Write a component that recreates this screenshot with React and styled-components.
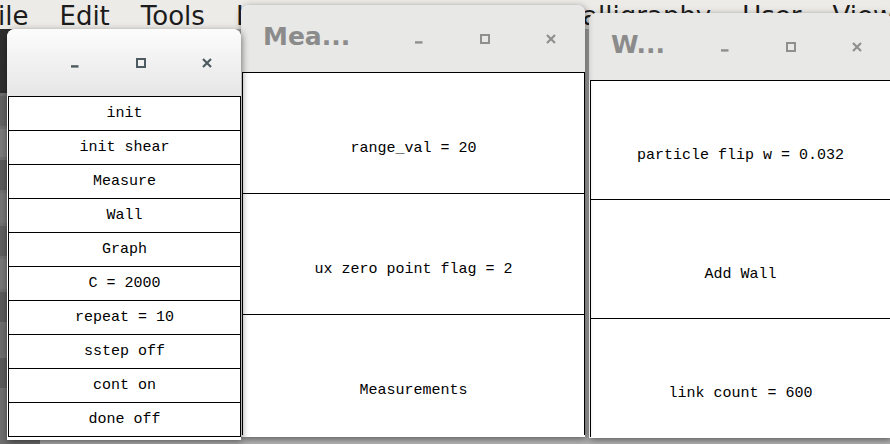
import styled, { createGlobalStyle } from "styled-components";

const GlobalStyle = createGlobalStyle`
  html, body {
    margin: 0;
    padding: 0;
    overflow: hidden;
  }
  body {
    font-family: "DejaVu Sans", sans-serif;
  }
`;

const Desktop = styled.div`
  position: relative;
  width: 890px;
  height: 444px;
  overflow: hidden;
  display: flex;
  flex-direction: column;
  background: #bdbdbd;
`;

const MenuBar = styled.nav`
  display: flex;
  gap: 31px;
  height: 29px;
  box-sizing: border-box;
  padding-top: 1px;
  margin-left: -2px;
  background: #edebe8;
  font-family: "DejaVu Sans", sans-serif;
  font-size: 26px;
  line-height: 30px;
  color: #1c1c1c;
  white-space: nowrap;
`;

const Workspace = styled.div`
  flex: 1;
  display: flex;
`;

const ToolStrip = styled.div`
  width: 40px;
  display: flex;
  flex-direction: column;
  gap: 3px;
  background: #6e6e6e;
`;

const Tool = styled.div`
  height: ${(p) => p.$h}px;
  background: ${(p) => p.$tone};
`;

const Canvas = styled.div`
  flex: 1;
  background: #b4b4b4;
`;

const Window = styled.section`
  position: absolute;
  left: ${(p) => p.$x}px;
  top: ${(p) => p.$y}px;
  width: ${(p) => p.$w}px;
  z-index: ${(p) => p.$z};
  display: flex;
  flex-direction: column;
  padding-bottom: ${(p) => p.$pb}px;
  background: #fff;
  border-radius: 8px 8px 0 0;
  box-shadow: 1px 2px 7px rgba(0, 0, 0, 0.5);
`;

const TitleBar = styled.header`
  height: 67px;
  display: flex;
  align-items: center;
  padding: 0 1px 0 22px;
  border-radius: 8px 8px 0 0;
  background: ${(p) =>
    p.$active ? "linear-gradient(#fcfcfc, #e6e6e6)" : "#e8e8e7"};
`;

const Title = styled.h1`
  margin: 0 0 4px 0;
  font-family: "DejaVu Sans", sans-serif;
  font-weight: bold;
  font-size: 25px;
  line-height: 25px;
  color: #8b8b8b;
`;

const Controls = styled.div`
  display: flex;
  margin-left: auto;
`;

const Control = styled.span`
  width: 66px;
  display: flex;
  justify-content: center;
  color: ${(p) => (p.$active ? "#4d5a60" : "#8f8f8f")};
`;

const Panel = styled.div`
  margin-left: 1px;
  border-left: 1px solid #000;
  border-right: 1px solid #000;
  border-bottom: ${(p) => (p.$closed ? "1px solid #000" : "none")};
`;

const Cell = styled.div`
  height: ${(p) => p.$h}px;
  box-sizing: border-box;
  border-top: 1px solid #000;
  padding-top: ${(p) => p.$shift || 0}px;
  display: flex;
  align-items: center;
  justify-content: center;
  font-family: "Liberation Mono", monospace;
  font-size: 15px;
  color: #000;
  white-space: pre;
`;

function MinimizeIcon() {
  return (
    <svg width="10" height="10" viewBox="0 0 10 10">
      <rect x="1" y="7.2" width="7.5" height="2.4" fill="currentColor" />
    </svg>
  );
}

function MaximizeIcon() {
  return (
    <svg width="10" height="10" viewBox="0 0 10 10">
      <rect
        x="1"
        y="1"
        width="8"
        height="8"
        fill="none"
        stroke="currentColor"
        strokeWidth="2"
      />
    </svg>
  );
}

function CloseIcon() {
  return (
    <svg width="10" height="10" viewBox="0 0 10 10">
      <path
        d="M1 1 L9 9 M9 1 L1 9"
        stroke="currentColor"
        strokeWidth="2.2"
        strokeLinecap="butt"
      />
    </svg>
  );
}

function DialogWindow({ x, y, w, z, pb, title, active, rows, rowHeight, shift, closed }) {
  return (
    <Window $x={x} $y={y} $w={w} $z={z} $pb={pb}>
      <TitleBar $active={active}>
        {title && <Title>{title}</Title>}
        <Controls>
          <Control $active={active}>
            <MinimizeIcon />
          </Control>
          <Control $active={active}>
            <MaximizeIcon />
          </Control>
          <Control $active={active}>
            <CloseIcon />
          </Control>
        </Controls>
      </TitleBar>
      <Panel $closed={closed}>
        {rows.map((label) => (
          <Cell key={label} $h={rowHeight} $shift={shift}>
            {label}
          </Cell>
        ))}
      </Panel>
    </Window>
  );
}

const menuItems = [
  "ile",
  "Edit",
  "Tools",
  "Layer",
  "Object",
  "Filters",
  "Calligraphy",
  "User",
  "View",
];

const tools = [
  { h: 64, tone: "#2e2e2e" },
  { h: 30, tone: "#626262" },
  { h: 28, tone: "#7a7a7a" },
  { h: 30, tone: "#5a5a5a" },
  { h: 30, tone: "#747474" },
  { h: 30, tone: "#5e5e5e" },
  { h: 30, tone: "#767676" },
  { h: 30, tone: "#5a5a5a" },
  { h: 30, tone: "#6c6c6c" },
  { h: 30, tone: "#5a5a5a" },
];

const controlRows = [
  "init",
  "init shear",
  "Measure",
  "Wall",
  "Graph",
  "C = 2000",
  "repeat = 10",
  "sstep off",
  "cont on",
  "done off",
];

const measureRows = ["range_val = 20", "ux zero point flag = 2", "Measurements"];

const wallRows = ["particle flip w = 0.032", "Add Wall", "link count = 600"];

export default function App() {
  return (
    <>
      <GlobalStyle />
      <Desktop>
        <MenuBar>
          {menuItems.map((item) => (
            <span key={item}>{item}</span>
          ))}
        </MenuBar>
        <Workspace>
          <ToolStrip>
            {tools.map((t, i) => (
              <Tool key={i} $h={t.h} $tone={t.tone} />
            ))}
          </ToolStrip>
          <Canvas />
        </Workspace>

        <DialogWindow
          x={7}
          y={29}
          w={234}
          z={3}
          pb={3}
          active
          rows={controlRows}
          rowHeight={34}
          closed
        />
        <DialogWindow
          x={241}
          y={5}
          w={344}
          z={2}
          pb={2}
          title="Mea..."
          rows={measureRows}
          rowHeight={121}
          shift={31}
        />
        <DialogWindow
          x={589}
          y={13}
          w={302}
          z={1}
          pb={1}
          title="W..."
          rows={wallRows}
          rowHeight={119}
          shift={31}
        />
      </Desktop>
    </>
  );
}
